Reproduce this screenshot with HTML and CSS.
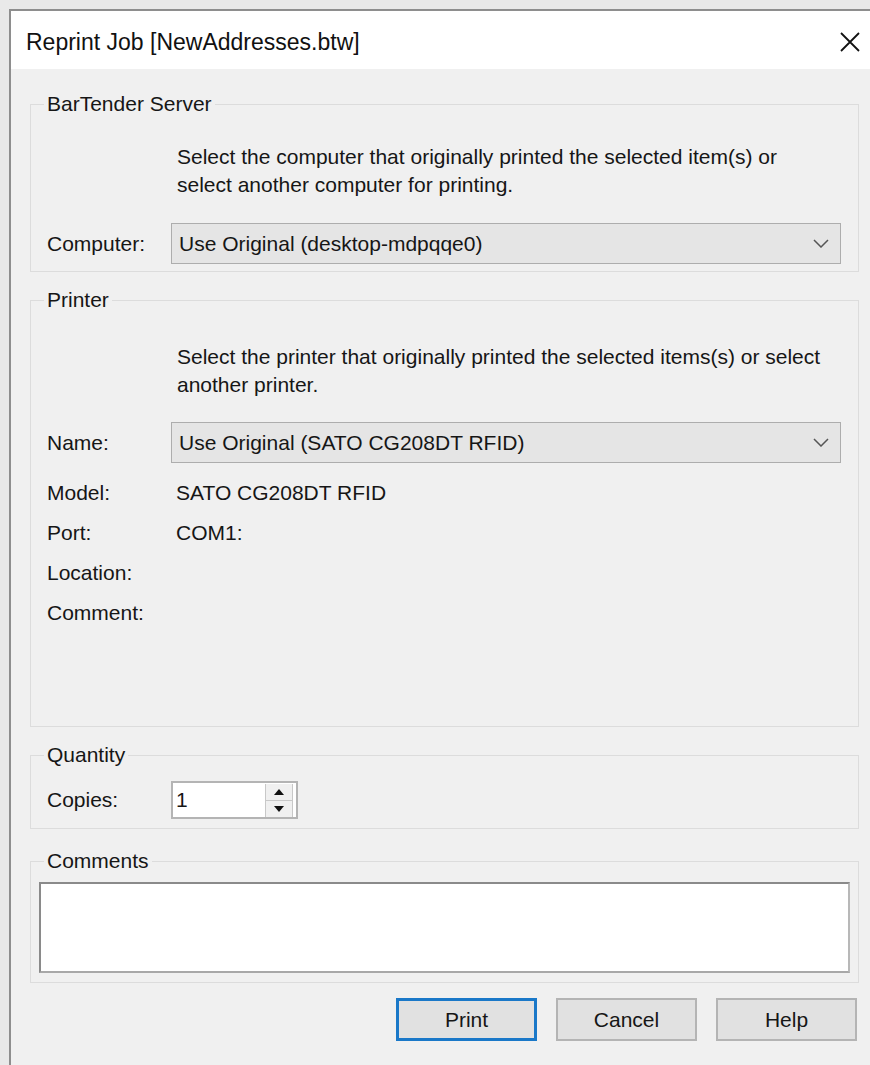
FILE: index.html
```html
<!DOCTYPE html>
<html lang="en">
<head>
<meta charset="utf-8">
<title>Reprint Job</title>
<link rel="stylesheet" href="styles.css">
</head>
<body>
<div class="window">
  <div class="titlebar">
    <span class="title">Reprint Job [NewAddresses.btw]</span>
    <svg class="close" width="20" height="20" viewBox="0 0 20 20"><path d="M1 1 L19 19 M19 1 L1 19" stroke="#111" stroke-width="1.8" fill="none"/></svg>
  </div>
  <div class="dialog">
    <fieldset class="group group-server">
      <legend>BarTender Server</legend>
      <p class="desc">Select the computer that originally printed the selected item(s) or<br>select another computer for printing.</p>
      <div class="row">
        <span class="label">Computer:</span>
        <div class="combo">
          <span>Use Original (desktop-mdpqqe0)</span>
          <svg class="chev" width="16" height="9" viewBox="0 0 16 9"><polyline points="1,1 8,8 15,1" stroke="#555" stroke-width="1.5" fill="none"/></svg>
        </div>
      </div>
    </fieldset>

    <fieldset class="group group-printer">
      <legend>Printer</legend>
      <p class="desc">Select the printer that originally printed the selected items(s) or select<br>another printer.</p>
      <div class="row">
        <span class="label">Name:</span>
        <div class="combo">
          <span>Use Original (SATO CG208DT RFID)</span>
          <svg class="chev" width="16" height="9" viewBox="0 0 16 9"><polyline points="1,1 8,8 15,1" stroke="#555" stroke-width="1.5" fill="none"/></svg>
        </div>
      </div>
      <div class="info">
        <div class="info-row"><span class="label">Model:</span><span class="value">SATO CG208DT RFID</span></div>
        <div class="info-row"><span class="label">Port:</span><span class="value">COM1:</span></div>
        <div class="info-row"><span class="label">Location:</span><span class="value"></span></div>
        <div class="info-row"><span class="label">Comment:</span><span class="value"></span></div>
      </div>
    </fieldset>

    <fieldset class="group group-qty">
      <legend>Quantity</legend>
      <div class="row">
        <span class="label">Copies:</span>
        <div class="spin">
          <span class="spin-value">1</span>
          <div class="spin-buttons">
            <div class="spin-btn"><svg width="10" height="6" viewBox="0 0 10 6"><polygon points="0,6 10,6 5,0" fill="#111"/></svg></div>
            <div class="spin-btn"><svg width="10" height="6" viewBox="0 0 10 6"><polygon points="0,0 10,0 5,6" fill="#111"/></svg></div>
          </div>
        </div>
      </div>
    </fieldset>

    <fieldset class="group group-comments">
      <legend>Comments</legend>
      <div class="comment-box"></div>
    </fieldset>

    <div class="buttons">
      <button class="btn btn-default">Print</button>
      <button class="btn">Cancel</button>
      <button class="btn">Help</button>
    </div>
  </div>
</div>
</body>
</html>
```

FILE: styles.css
```css
html, body {
  margin: 0;
  padding: 0;
  background: #e9e9e9;
  height: 100%;
  overflow: hidden;
}

body {
  font-family: "Liberation Sans", Arial, sans-serif;
  font-size: 21px;
  color: #161616;
}

.window {
  margin: 9px 0 0 9px;
  border-left: 2px solid #8e8e8e;
  border-top: 2px solid #8e8e8e;
  background: #f0f0f0;
  height: calc(100% - 9px);
  box-sizing: border-box;
}

.titlebar {
  height: 58px;
  background: #fff;
  display: flex;
  align-items: center;
  justify-content: space-between;
  padding: 0 10px 0 15px;
}

.title {
  font-size: 23px;
  color: #111;
  padding-top: 4px;
}

.close {
  margin-top: 4px;
}

.dialog {
  width: 829px;
  margin-left: 19px;
  padding-top: 23px;
}

.group {
  margin: 0;
  border: 1px solid #dcdcdc;
  padding: 0 16px;
  min-width: 0;
}

.group legend {
  padding: 0 3px;
  margin-left: -3px;
  line-height: 24px;
  color: #161616;
}

.desc {
  margin: 27px 0 0 130px;
  line-height: 28px;
}

.row {
  display: flex;
  align-items: center;
}

.label {
  width: 124px;
  flex: none;
}

.combo {
  flex: 1;
  height: 41px;
  box-sizing: border-box;
  margin-right: 1px;
  background: #e5e5e5;
  border: 1px solid #adadad;
  display: flex;
  align-items: center;
  justify-content: space-between;
  padding: 0 11px 0 7px;
}

.group-server {
  padding-bottom: 7px;
}

.group-server .row {
  margin-top: 24px;
}

.group-printer {
  margin-top: 16px;
  padding-bottom: 93px;
}

.group-printer .desc {
  margin-top: 31px;
}

.group-printer .row {
  margin-top: 23px;
}

.info {
  margin-top: 10px;
}

.info-row {
  display: flex;
  align-items: center;
  height: 40px;
}

.value {
  margin-left: 5px;
}

.group-qty {
  margin-top: 16px;
  padding-bottom: 9px;
}

.group-qty .row {
  margin-top: 14px;
}

.spin {
  width: 127px;
  height: 38px;
  box-sizing: border-box;
  border: 2px solid #b4b4b4;
  background: #fff;
  display: flex;
  align-items: center;
  justify-content: space-between;
  padding: 0 3px 0 3px;
}

.spin-buttons {
  display: flex;
  flex-direction: column;
  width: 26px;
  height: 33px;
  border-left: 1px solid #c8c8c8;
  border-right: 1px solid #c8c8c8;
}

.spin-btn {
  flex: 1;
  display: flex;
  align-items: center;
  justify-content: center;
  background: #f0f0f0;
}

.spin-btn + .spin-btn {
  border-top: 1px solid #c8c8c8;
}

.group-comments {
  margin-top: 20px;
  padding-bottom: 9px;
}

.comment-box {
  margin: 9px 0 0 -8px;
  width: 811px;
  height: 91px;
  box-sizing: border-box;
  background: #fff;
  border: 2px solid #8a8a8a;
  border-right-color: #b8b8b8;
  border-bottom-color: #a8a8a8;
}

.buttons {
  display: flex;
  justify-content: flex-end;
  gap: 19px;
  margin-top: 15px;
  padding-right: 2px;
}

.btn {
  width: 141px;
  height: 43px;
  font-family: inherit;
  font-size: 21px;
  color: #161616;
  background: #e1e1e1;
  border: 2px solid #b4b4b4;
  padding: 0;
}

.btn-default {
  border: 3px solid #1a78c8;
}
```
